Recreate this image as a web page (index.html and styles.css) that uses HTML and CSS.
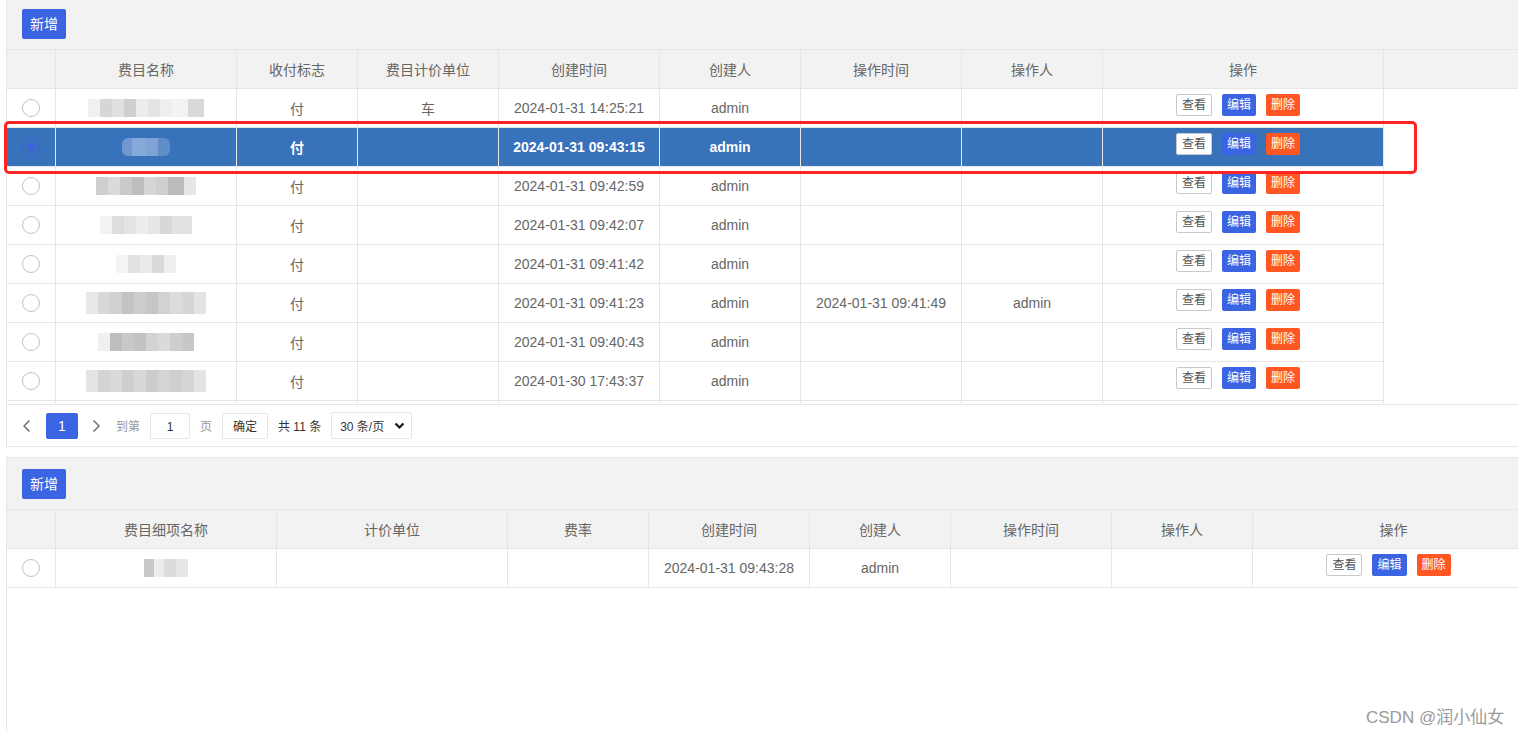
FILE: index.html
```html
<!DOCTYPE html>
<html lang="zh-CN">
<head>
<meta charset="utf-8">
<title>费目管理</title>
<link rel="stylesheet" href="styles.css">
</head>
<body>
<div class="page">
  <section class="panel panel-top">
    <div class="toolbar"><button class="btn-add">新增</button></div>
    <div class="thead">
      <div class="c c1"></div>
      <div class="c t2">费目名称</div>
      <div class="c t3">收付标志</div>
      <div class="c t4">费目计价单位</div>
      <div class="c t5">创建时间</div>
      <div class="c t6">创建人</div>
      <div class="c t7">操作时间</div>
      <div class="c t8">操作人</div>
      <div class="c t9">操作</div>
    </div>
    <div class="tbody">
      <div class="row">
        <div class="c c1"><span class="radio"></span></div>
        <div class="c t2"><span class="mz mz1"></span></div>
        <div class="c t3">付</div>
        <div class="c t4">车</div>
        <div class="c t5">2024-01-31 14:25:21</div>
        <div class="c t6">admin</div>
        <div class="c t7"></div>
        <div class="c t8"></div>
        <div class="c t9 ops"><span class="b b-view">查看</span><span class="b b-edit">编辑</span><span class="b b-del">删除</span></div>
      </div>
      <div class="row sel">
        <div class="c c1"><span class="radio on"></span></div>
        <div class="c t2"><span class="mz mz2"></span></div>
        <div class="c t3">付</div>
        <div class="c t4"></div>
        <div class="c t5">2024-01-31 09:43:15</div>
        <div class="c t6">admin</div>
        <div class="c t7"></div>
        <div class="c t8"></div>
        <div class="c t9 ops"><span class="b b-view">查看</span><span class="b b-edit">编辑</span><span class="b b-del">删除</span></div>
      </div>
      <div class="row">
        <div class="c c1"><span class="radio"></span></div>
        <div class="c t2"><span class="mz mz3"></span></div>
        <div class="c t3">付</div>
        <div class="c t4"></div>
        <div class="c t5">2024-01-31 09:42:59</div>
        <div class="c t6">admin</div>
        <div class="c t7"></div>
        <div class="c t8"></div>
        <div class="c t9 ops"><span class="b b-view">查看</span><span class="b b-edit">编辑</span><span class="b b-del">删除</span></div>
      </div>
      <div class="row">
        <div class="c c1"><span class="radio"></span></div>
        <div class="c t2"><span class="mz mz4"></span></div>
        <div class="c t3">付</div>
        <div class="c t4"></div>
        <div class="c t5">2024-01-31 09:42:07</div>
        <div class="c t6">admin</div>
        <div class="c t7"></div>
        <div class="c t8"></div>
        <div class="c t9 ops"><span class="b b-view">查看</span><span class="b b-edit">编辑</span><span class="b b-del">删除</span></div>
      </div>
      <div class="row">
        <div class="c c1"><span class="radio"></span></div>
        <div class="c t2"><span class="mz mz5"></span></div>
        <div class="c t3">付</div>
        <div class="c t4"></div>
        <div class="c t5">2024-01-31 09:41:42</div>
        <div class="c t6">admin</div>
        <div class="c t7"></div>
        <div class="c t8"></div>
        <div class="c t9 ops"><span class="b b-view">查看</span><span class="b b-edit">编辑</span><span class="b b-del">删除</span></div>
      </div>
      <div class="row">
        <div class="c c1"><span class="radio"></span></div>
        <div class="c t2"><span class="mz mz6"></span></div>
        <div class="c t3">付</div>
        <div class="c t4"></div>
        <div class="c t5">2024-01-31 09:41:23</div>
        <div class="c t6">admin</div>
        <div class="c t7">2024-01-31 09:41:49</div>
        <div class="c t8">admin</div>
        <div class="c t9 ops"><span class="b b-view">查看</span><span class="b b-edit">编辑</span><span class="b b-del">删除</span></div>
      </div>
      <div class="row">
        <div class="c c1"><span class="radio"></span></div>
        <div class="c t2"><span class="mz mz7"></span></div>
        <div class="c t3">付</div>
        <div class="c t4"></div>
        <div class="c t5">2024-01-31 09:40:43</div>
        <div class="c t6">admin</div>
        <div class="c t7"></div>
        <div class="c t8"></div>
        <div class="c t9 ops"><span class="b b-view">查看</span><span class="b b-edit">编辑</span><span class="b b-del">删除</span></div>
      </div>
      <div class="row">
        <div class="c c1"><span class="radio"></span></div>
        <div class="c t2"><span class="mz mz8"></span></div>
        <div class="c t3">付</div>
        <div class="c t4"></div>
        <div class="c t5">2024-01-30 17:43:37</div>
        <div class="c t6">admin</div>
        <div class="c t7"></div>
        <div class="c t8"></div>
        <div class="c t9 ops"><span class="b b-view">查看</span><span class="b b-edit">编辑</span><span class="b b-del">删除</span></div>
      </div>
      <div class="row">
        <div class="c c1"></div>
        <div class="c t2"></div>
        <div class="c t3"></div>
        <div class="c t4"></div>
        <div class="c t5"></div>
        <div class="c t6"></div>
        <div class="c t7"></div>
        <div class="c t8"></div>
        <div class="c t9"></div>
      </div>
    </div>
    <div class="pager">
      <span class="pg-prev"><svg width="10" height="14" viewBox="0 0 10 14"><path d="M7.5 1.5 L2 7 L7.5 12.5" fill="none" stroke="#666" stroke-width="1.4"/></svg></span>
      <span class="pg-cur">1</span>
      <span class="pg-next"><svg width="10" height="14" viewBox="0 0 10 14"><path d="M2.5 1.5 L8 7 L2.5 12.5" fill="none" stroke="#666" stroke-width="1.4"/></svg></span>
      <span class="pg-lbl">到第</span>
      <span class="pg-input">1</span>
      <span class="pg-lbl pg-ye">页</span>
      <span class="pg-ok">确定</span>
      <span class="pg-count">共 11 条</span>
      <span class="pg-limit">30 条/页<svg class="pg-arrow" width="11" height="8" viewBox="0 0 11 8"><path d="M1.5 1.5 L5.5 5.5 L9.5 1.5" fill="none" stroke="#111" stroke-width="2.2"/></svg></span>
    </div>
  </section>

  <section class="panel panel-bottom">
    <div class="toolbar"><button class="btn-add">新增</button></div>
    <div class="thead">
      <div class="c c1"></div>
      <div class="c s2">费目细项名称</div>
      <div class="c s3">计价单位</div>
      <div class="c s4">费率</div>
      <div class="c s5">创建时间</div>
      <div class="c s6">创建人</div>
      <div class="c s7">操作时间</div>
      <div class="c s8">操作人</div>
      <div class="c s9">操作</div>
    </div>
    <div class="tbody2">
      <div class="row row-full">
        <div class="c c1"><span class="radio"></span></div>
        <div class="c s2"><span class="mz mz9"></span></div>
        <div class="c s3"></div>
        <div class="c s4"></div>
        <div class="c s5">2024-01-31 09:43:28</div>
        <div class="c s6">admin</div>
        <div class="c s7"></div>
        <div class="c s8"></div>
        <div class="c s9 ops"><span class="b b-view">查看</span><span class="b b-edit">编辑</span><span class="b b-del">删除</span></div>
      </div>
    </div>
  </section>

  <div class="annot"></div>
  <div class="watermark">CSDN @润小仙女</div>
</div>
</body>
</html>
```

FILE: styles.css
```css
html, body {
  margin: 0;
  padding: 0;
  background: #fff;
  overflow: hidden;
  height: 100%;
}

body {
  font-family: "Liberation Sans", "Noto Sans CJK SC", sans-serif;
  font-size: 14px;
  color: #666;
}

.page {
  position: relative;
  height: 734px;
  padding-left: 6px;
  margin-top: -3px;
  overflow: hidden;
}

.panel {
  width: 1540px;
  border: 1px solid #e6e6e6;
  box-sizing: border-box;
  background: #fff;
}

.panel-bottom {
  margin-top: 10px;
  height: 400px;
}

.toolbar {
  height: 52px;
  box-sizing: border-box;
  background: #f2f2f2;
  border-bottom: 1px solid #e6e6e6;
  padding: 11px 15px 0;
}

.btn-add {
  display: block;
  width: 44px;
  height: 30px;
  padding: 0;
  border: 0;
  border-radius: 2px;
  background: #3a64e2;
  color: #fff;
  font-family: "Liberation Sans", "Noto Sans CJK SC", sans-serif;
  font-size: 14px;
  line-height: 30px;
  text-align: center;
}

.thead {
  display: flex;
  height: 39px;
  box-sizing: border-box;
  background: #f2f2f2;
  border-bottom: 1px solid #e6e6e6;
}

.tbody {
  height: 315px;
  overflow: hidden;
}

.row {
  display: flex;
  width: 1377px;
  height: 39px;
  box-sizing: border-box;
  border-bottom: 1px solid #e6e6e6;
  background: #fff;
}

.row-full {
  width: 1527px;
}

.c {
  flex: none;
  height: 100%;
  box-sizing: border-box;
  border-right: 1px solid #e6e6e6;
  display: flex;
  align-items: center;
  justify-content: center;
  white-space: nowrap;
}

.c1 { width: 49px; }
.t2 { width: 181px; }
.t3 { width: 121px; }
.t4 { width: 141px; }
.t5 { width: 161px; }
.t6 { width: 141px; }
.t7 { width: 161px; }
.t8 { width: 141px; }
.t9 { width: 281px; }

.s2 { width: 221px; }
.s3 { width: 231px; }
.s4 { width: 141px; }
.s5 { width: 161px; }
.s6 { width: 141px; }
.s7 { width: 161px; }
.s8 { width: 141px; }
.s9 { width: 281px; border-right: 0; }

.sel {
  background: #3772bb;
  color: #fff;
  font-weight: bold;
}

.radio {
  display: block;
  width: 18px;
  height: 18px;
  box-sizing: border-box;
  border: 1px solid #c2c2c2;
  border-radius: 50%;
  background: #fff;
  position: relative;
}

.radio.on {
  border: 1px solid #3d62e0;
  background: transparent;
}

.radio.on::after {
  content: "";
  position: absolute;
  left: 4px;
  top: 4px;
  width: 8px;
  height: 8px;
  border-radius: 50%;
  background: #3d62e0;
}

.ops {
  padding: 0 10px 6px 0;
}

.b {
  display: inline-block;
  height: 22px;
  line-height: 22px;
  padding: 0 5px;
  font-size: 12px;
  font-weight: normal;
  border-radius: 2px;
  color: #fff;
  margin-left: 10px;
}

.b-view {
  margin-left: 0;
  background: #fff;
  color: #555;
  border: 1px solid #c9c9c9;
  height: 20px;
  line-height: 20px;
}

.b-edit { background: #3a64e2; }
.b-del { background: #ff5722; }

/* redacted (mosaic) names */
.mz {
  display: block;
  height: 18px;
}

.mz1 {
  width: 116px;
  background: linear-gradient(90deg, #f0f0f0 0 12px, #d6d6d6 12px 24px, #e0e0e0 24px 36px, #cfcfcf 36px 48px, #ececec 48px 60px, #e4e4e4 60px 72px, #eeeeee 72px 84px, #f3f3f3 84px 100px, #d9d9d9 100px 116px);
}

.mz2 {
  width: 48px;
  background: linear-gradient(90deg, #6e98cf 0 10px, #85a9d9 10px 24px, #7ea3d4 24px 36px, #5f8dc8 36px 48px);
  border-radius: 6px;
}

.mz3 {
  width: 100px;
  background: linear-gradient(90deg, #cfcfcf 0 12px, #dadada 12px 24px, #cacaca 24px 36px, #bebebe 36px 48px, #d6d6d6 48px 60px, #cfcfcf 60px 72px, #bcbcbc 72px 88px, #e6e6e6 88px 100px);
}

.mz4 {
  width: 92px;
  background: linear-gradient(90deg, #f2f2f2 0 12px, #dddddd 12px 24px, #e4e4e4 24px 36px, #ededed 36px 48px, #e6e6e6 48px 60px, #d8d8d8 60px 72px, #e2e2e2 72px 92px);
}

.mz5 {
  width: 60px;
  background: linear-gradient(90deg, #f4f4f4 0 12px, #e2e2e2 12px 24px, #ebebeb 24px 36px, #d9d9d9 36px 48px, #efefef 48px 60px);
}

.mz6 {
  width: 120px;
  height: 22px;
  background: linear-gradient(90deg, #e8e8e8 0 12px, #d8d8d8 12px 24px, #d0d0d0 24px 36px, #c3c3c3 36px 48px, #cccccc 48px 60px, #c6c6c6 60px 72px, #d2d2d2 72px 84px, #dcdcdc 84px 96px, #d6d6d6 96px 108px, #e4e4e4 108px 120px);
}

.mz7 {
  width: 96px;
  background: linear-gradient(90deg, #f0f0f0 0 12px, #bdbdbd 12px 24px, #c8c8c8 24px 36px, #c2c2c2 36px 48px, #d3d3d3 48px 60px, #dadada 60px 72px, #cdcdcd 72px 84px, #c7c7c7 84px 96px);
}

.mz8 {
  width: 120px;
  height: 22px;
  background: linear-gradient(90deg, #e4e4e4 0 12px, #d4d4d4 12px 24px, #dadada 24px 36px, #cfcfcf 36px 48px, #d8d8d8 48px 60px, #cccccc 60px 72px, #d4d4d4 72px 84px, #cfcfcf 84px 96px, #d6d6d6 96px 108px, #e4e4e4 108px 120px);
}

.mz9 {
  width: 44px;
  background: linear-gradient(90deg, #c8c8c8 0 10px, #ececec 10px 20px, #dcdcdc 20px 32px, #e6e6e6 32px 44px);
}

/* pagination */
.pager {
  display: flex;
  align-items: center;
  height: 42px;
  box-sizing: border-box;
  border-top: 1px solid #e6e6e6;
  padding-left: 7px;
  font-size: 12px;
  color: #333;
}

.pg-prev,
.pg-next {
  display: flex;
  align-items: center;
  justify-content: center;
  width: 26px;
  height: 26px;
}

.pg-prev { margin-right: 6px; }
.pg-next { margin-left: 4px; width: 28px; }

.pg-cur {
  width: 32px;
  height: 26px;
  line-height: 26px;
  text-align: center;
  background: #3a64e2;
  color: #fff;
  border-radius: 2px;
  font-size: 14px;
}

.pg-lbl {
  margin-left: 6px;
  color: #999;
  font-size: 12px;
}

.pg-ye { margin-left: 10px; }

.pg-input {
  margin-left: 10px;
  width: 40px;
  height: 26px;
  line-height: 26px;
  box-sizing: border-box;
  border: 1px solid #e6e6e6;
  border-radius: 2px;
  text-align: center;
  color: #333;
}

.pg-ok {
  margin-left: 10px;
  width: 46px;
  height: 26px;
  line-height: 26px;
  box-sizing: border-box;
  border: 1px solid #e6e6e6;
  border-radius: 2px;
  text-align: center;
  color: #333;
}

.pg-count {
  margin-left: 10px;
  color: #333;
}

.pg-limit {
  margin-left: 10px;
  display: flex;
  align-items: center;
  width: 81px;
  height: 27px;
  box-sizing: border-box;
  border: 1px solid #e6e6e6;
  border-radius: 2px;
  padding-left: 8px;
  color: #333;
  position: relative;
}

.pg-arrow {
  position: absolute;
  right: 6px;
  top: 9px;
}

/* annotation rectangle drawn over the selected row */
.annot {
  position: absolute;
  left: 4px;
  top: 124px;
  width: 1413px;
  height: 53px;
  box-sizing: border-box;
  border: 3px solid #ff2424;
  border-radius: 5px;
}

.watermark {
  position: absolute;
  left: 1366px;
  top: 706px;
  font-size: 17px;
  color: #9a9a9a;
  text-shadow: 0 0 1px #fff;
}
```
